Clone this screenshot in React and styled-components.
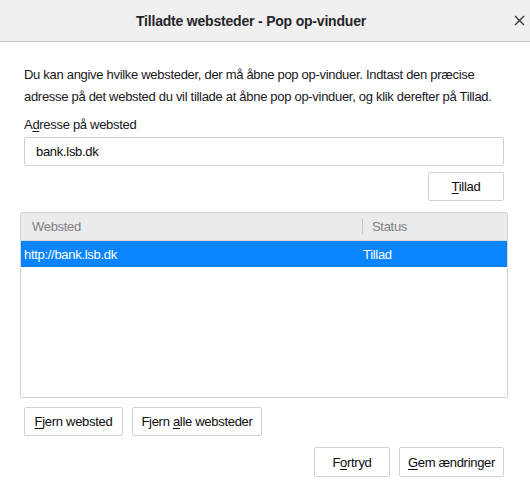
import React from 'react'
import styled, { createGlobalStyle } from 'styled-components'

const Global = createGlobalStyle`
  html, body {
    margin: 0;
    padding: 0;
    background: #fff;
  }
  body {
    font-family: "Liberation Sans", Arial, sans-serif;
    font-size: 13px;
    letter-spacing: -0.3px;
    color: #18181c;
  }
`

const Dialog = styled.div`
  width: 530px;
  height: 496px;
  display: flex;
  flex-direction: column;
  background: #fff;
  overflow: hidden;
`

const Header = styled.div`
  height: 41px;
  display: flex;
  align-items: center;
  background: #f0f0f0;
  border-bottom: 1px solid #c6c6c6;
`

const Title = styled.div`
  flex: 1;
  text-align: center;
  font-size: 14px;
  letter-spacing: -0.2px;
  font-weight: bold;
  color: #26262a;
`

const Close = styled.div`
  width: 28px;
  display: flex;
  align-items: center;
  justify-content: flex-end;
  padding-right: 5px;
  box-sizing: border-box;
`

const Body = styled.div`
  display: flex;
  flex-direction: column;
  padding: 22px 26px 0 24px;
`

const Intro = styled.p`
  margin: 0;
  line-height: 22px;
  white-space: nowrap;
`

const Label = styled.div`
  margin-top: 6px;
  line-height: 22px;
`

const Input = styled.div`
  margin-top: 1px;
  height: 27px;
  border: 1px solid #cfcfd4;
  border-radius: 2px;
  display: flex;
  align-items: center;
  padding-left: 11px;
  color: #0c0c0d;
`

const Row = styled.div`
  display: flex;
  gap: ${p => p.$gap || 9}px;
  justify-content: ${p => (p.$end ? 'flex-end' : 'flex-start')};
  margin-top: ${p => p.$top || 0}px;
`

const Button = styled.div`
  width: ${p => p.$w}px;
  height: ${p => p.$h || 27}px;
  box-sizing: content-box;
  border: 1px solid #d2d2d6;
  border-radius: 2px;
  background: #fff;
  display: flex;
  align-items: center;
  justify-content: center;
  color: #0c0c0d;
`

const Key = styled.span`
  text-decoration: underline;
  text-underline-offset: 2px;
`

const Tree = styled.div`
  margin: 11px -4px 0 -4px;
  height: 184px;
  border: 1px solid #d4d4d8;
  border-radius: 2px;
  display: flex;
  flex-direction: column;
`

const TreeHead = styled.div`
  height: 27px;
  display: flex;
  align-items: center;
  background: #ebebeb;
  border-bottom: 1px solid #d8d8d8;
  color: #808085;
`

const Col = styled.div`
  display: flex;
  align-items: center;
  height: 100%;
  padding-left: ${p => p.$pad}px;
  width: ${p => (p.$w ? p.$w + 'px' : 'auto')};
  flex: ${p => (p.$w ? 'none' : 1)};
  box-sizing: border-box;
`

const Splitter = styled.div`
  width: 1px;
  height: 15px;
  background: #c4c4c4;
`

const TreeRow = styled.div`
  height: 26px;
  display: flex;
  align-items: center;
  background: ${p => (p.$selected ? '#0a84ff' : 'transparent')};
  color: ${p => (p.$selected ? '#fff' : '#0c0c0d')};
`

export default function App() {
  return (
    <Dialog>
      <Global />
      <Header>
        <Title>Tilladte websteder - Pop op-vinduer</Title>
        <Close>
          <svg width="11" height="11" viewBox="0 0 11 11">
            <path d="M1 1L10 10M10 1L1 10" stroke="#3b3b3b" strokeWidth="1.4" />
          </svg>
        </Close>
      </Header>
      <Body>
        <Intro>
          Du kan angive hvilke websteder, der må åbne pop op-vinduer. Indtast den præcise
          <br />
          adresse på det websted du vil tillade at åbne pop op-vinduer, og klik derefter på Tillad.
        </Intro>
        <Label>A<Key>d</Key>resse på websted</Label>
        <Input>bank.lsb.dk</Input>
        <Row $end $top={6}>
          <Button $w={74}><span><Key>T</Key>illad</span></Button>
        </Row>
        <Tree>
          <TreeHead>
            <Col $w={341} $pad={11}>Websted</Col>
            <Splitter />
            <Col $pad={9}>Status</Col>
          </TreeHead>
          <TreeRow $selected>
            <Col $w={342} $pad={3}>http://bank.lsb.dk</Col>
            <Col $pad={0}>Tillad</Col>
          </TreeRow>
        </Tree>
        <Row $top={9}>
          <Button $w={97}><span><Key>F</Key>jern websted</span></Button>
          <Button $w={128}><span>Fjern <Key>a</Key>lle websteder</span></Button>
        </Row>
        <Row $end $top={11}>
          <Button $w={74} $h={28}><span>F<Key>o</Key>rtryd</span></Button>
          <Button $w={103} $h={28}><span><Key>G</Key>em ændringer</span></Button>
        </Row>
      </Body>
    </Dialog>
  )
}
